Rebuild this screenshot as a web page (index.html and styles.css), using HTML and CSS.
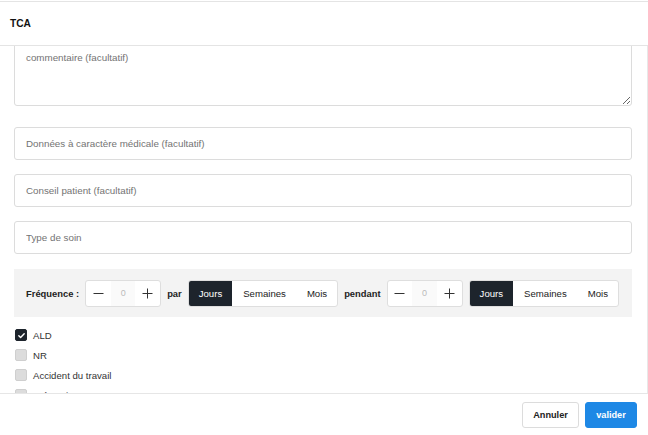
FILE: index.html
```html
<!DOCTYPE html>
<html lang="fr">
<head>
<meta charset="utf-8">
<title>TCA</title>
<link rel="stylesheet" href="styles.css">
</head>
<body>
<div class="modal">
  <header class="modal-header">
    <h1 class="title">TCA</h1>
  </header>
  <main class="modal-body">
    <div class="content">
      <textarea class="field area" placeholder="commentaire (facultatif)"></textarea>
      <input class="field input" type="text" placeholder="Données à caractère médicale (facultatif)">
      <input class="field input" type="text" placeholder="Conseil patient (facultatif)">
      <input class="field input" type="text" placeholder="Type de soin">

      <div class="freq">
        <span class="lbl">Fréquence :</span>
        <div class="stepper">
          <span class="step-btn"><svg width="11" height="11" viewBox="0 0 11 11"><path d="M0.5 5.5h10" stroke="#333" stroke-width="1"/></svg></span>
          <span class="step-val">0</span>
          <span class="step-btn"><svg width="11" height="11" viewBox="0 0 11 11"><path d="M0.5 5.5h10M5.5 0.5v10" stroke="#333" stroke-width="1"/></svg></span>
        </div>
        <span class="lbl">par</span>
        <div class="seg">
          <span class="seg-item active">Jours</span>
          <span class="seg-item">Semaines</span>
          <span class="seg-item">Mois</span>
        </div>
        <span class="lbl">pendant</span>
        <div class="stepper">
          <span class="step-btn"><svg width="11" height="11" viewBox="0 0 11 11"><path d="M0.5 5.5h10" stroke="#333" stroke-width="1"/></svg></span>
          <span class="step-val">0</span>
          <span class="step-btn"><svg width="11" height="11" viewBox="0 0 11 11"><path d="M0.5 5.5h10M5.5 0.5v10" stroke="#333" stroke-width="1"/></svg></span>
        </div>
        <div class="seg">
          <span class="seg-item active">Jours</span>
          <span class="seg-item">Semaines</span>
          <span class="seg-item">Mois</span>
        </div>
      </div>

      <ul class="checks">
        <li class="check"><span class="box checked"><svg width="9" height="9" viewBox="0 0 9 9"><path d="M1.8 4.7l1.8 1.8 3.6-3.8" fill="none" stroke="#fff" stroke-width="1.4" stroke-linecap="round" stroke-linejoin="round"/></svg></span>ALD</li>
        <li class="check"><span class="box"></span>NR</li>
        <li class="check"><span class="box"></span>Accident du travail</li>
        <li class="check"><span class="box"></span>Prévention</li>
      </ul>
    </div>
  </main>
  <footer class="modal-footer">
    <button class="btn btn-cancel" type="button">Annuler</button>
    <button class="btn btn-ok" type="button">valider</button>
  </footer>
</div>
</body>
</html>
```

FILE: styles.css
```css
* { box-sizing: border-box; }
html, body { margin: 0; padding: 0; background: #fff; }
body {
  font-family: "Liberation Sans", Arial, sans-serif;
  font-size: 10px;
  color: #222;
}
.modal {
  width: 648px;
  height: 435px;
  display: flex;
  flex-direction: column;
  padding-top: 1px;
}
.modal-header {
  height: 45px;
  border-top: 1px solid #e4e4e4;
  border-bottom: 1px solid #e4e4e4;
  display: flex;
  align-items: center;
  padding-left: 10px;
}
.title {
  margin: 0;
  font-size: 10.2px;
  font-weight: bold;
  color: #111;
}
.modal-body {
  flex: 1;
  overflow: hidden;
  border-right: 1px solid #e8e8e8;
  padding: 0 15px 0 14px;
}
.content {
  margin-top: -6px;
  display: flex;
  flex-direction: column;
}
.field {
  display: block;
  width: 100%;
  border: 1px solid #dcdcdc;
  border-radius: 3px;
  font-family: inherit;
  font-size: 9.8px;
  color: #222;
  background: #fff;
  padding: 0 11px;
  outline: none;
}
.field::placeholder { color: #737373; }
.area {
  height: 66px;
  padding-top: 11px;
  resize: vertical;
  margin-bottom: 21px;
}
.input {
  height: 33px;
  margin-bottom: 14px;
}
.freq {
  margin-top: 1px;
  height: 48px;
  background: #f3f3f3;
  display: flex;
  align-items: center;
  gap: 6px;
  padding-left: 12px;
}
.lbl {
  font-weight: bold;
  font-size: 9.4px;
  color: #222;
}
.stepper {
  display: flex;
  height: 27px;
  width: 76px;
  border: 1px solid #dedede;
  border-radius: 3px;
  background: #fff;
  overflow: hidden;
}
.step-btn {
  width: 25px;
  display: flex;
  align-items: center;
  justify-content: center;
}
.step-val {
  width: 25px;
  background: #fafafa;
  display: flex;
  align-items: center;
  justify-content: center;
  color: #bbb;
  font-size: 9px;
}
.seg {
  display: flex;
  height: 27px;
  border: 1px solid #dedede;
  border-radius: 3px;
  background: #fff;
  overflow: hidden;
}
.seg-item {
  display: flex;
  align-items: center;
  padding: 0 10px;
  font-size: 9.6px;
  color: #222;
}
.seg-item.active {
  background: #1d242c;
  color: #fff;
}
.seg-item:nth-child(2) { padding: 0 11px; }
.checks {
  list-style: none;
  margin: 8px 0 0;
  padding: 0 0 0 1px;
}
.check {
  height: 20px;
  display: flex;
  align-items: center;
  font-size: 9.6px;
  color: #333;
}
.box {
  width: 12px;
  height: 12px;
  border-radius: 2px;
  background: #dcdcdc;
  border: 1px solid #cfcfcf;
  margin-right: 6px;
  display: flex;
  align-items: center;
  justify-content: center;
}
.box.checked {
  background: #1d242c;
  border-color: #1d242c;
}
.modal-footer {
  height: 42px;
  border-top: 1px solid #e6e6e6;
  display: flex;
  align-items: center;
  justify-content: flex-end;
  gap: 6px;
  padding-right: 11px;
}
.btn {
  height: 26px;
  border-radius: 3px;
  font-family: inherit;
  font-size: 9.2px;
  font-weight: bold;
  padding: 0;
  cursor: pointer;
}
.btn-cancel {
  width: 57px;
  background: #fff;
  border: 1px solid #dcdcdc;
  color: #222;
}
.btn-ok {
  width: 52px;
  background: #1e88e5;
  border: 1px solid #1e88e5;
  color: #fff;
}
```
